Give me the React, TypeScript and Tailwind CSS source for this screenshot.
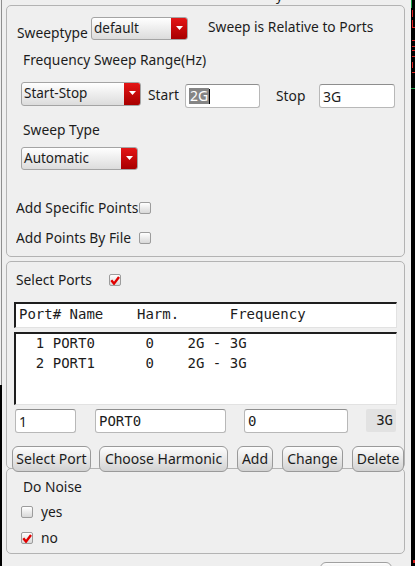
import React from "react";

const sans = "font-['Noto_Sans','DejaVu_Sans',sans-serif]";
const mono = "font-['DejaVu_Sans_Mono',monospace]";

function Combo({ label, w, h }: { label: string; w: string; h: string }) {
  return (
    <div
      className={`flex shrink-0 ${w} ${h} rounded-[3px] border border-[#a4a4a4] bg-linear-to-b from-white to-[#dcdcdc] overflow-hidden`}
    >
      <span className="flex-1 pl-[2px] leading-[20px] text-[13.5px] text-[#1c1c1c]">{label}</span>
      <div className="w-[16px] flex items-center justify-center bg-linear-to-b from-[#e41515] to-[#a80000]">
        <svg width="7" height="4" viewBox="0 0 7 4" className="-mt-[2px]">
          <path d="M0 0 H7 L3.5 4 Z" fill="white" />
        </svg>
      </div>
    </div>
  );
}

function Check({ on }: { on?: boolean }) {
  return (
    <div className="w-[12px] h-[12px] shrink-0 rounded-[2px] border border-[#9c9c9c] bg-linear-to-b from-white to-[#d8d8d8] flex items-center justify-center">
      {on && (
        <svg width="10" height="9" viewBox="0 0 10 9">
          <path d="M1.3 4.3 L4 7.6 L9 1" stroke="#e00000" strokeWidth="2.4" fill="none" />
        </svg>
      )}
    </div>
  );
}

function Field({ w, h = "h-[24px]", children }: { w: string; h?: string; children?: React.ReactNode }) {
  return (
    <div
      className={`${w} ${h} shrink-0 rounded-[3px] border border-[#b8b8b8] border-t-[#8e8e8e] bg-white flex items-center pl-[3px] text-[14px] text-[#1c1c1c]`}
    >
      {children}
    </div>
  );
}

function Btn({ w, label, ml }: { w: string; label: string; ml: string }) {
  return (
    <button
      className={`${w} ${ml} h-[26px] shrink-0 rounded-[6px] border border-[#9a9a9a] bg-linear-to-b from-[#fdfdfd] to-[#d2d2d2] text-[14px] leading-[24px] text-[#1c1c1c] text-center whitespace-nowrap`}
    >
      {label}
    </button>
  );
}

export default function App() {
  return (
    <div className={`w-[415px] h-[566px] overflow-hidden flex bg-[#efefef] ${sans}`}>
      {/* left edge */}
      <div className="w-[6px] shrink-0 flex flex-col">
        <div className="h-[385px] w-[2px] border-r border-[#8e8e8e]" />
        <div className="flex-1 w-[2px] bg-black" />
      </div>

      <div className="w-[399px] shrink-0">
        <div className="h-[5px] overflow-hidden pl-[270px]">
          <span className="block -mt-[10px] text-[13px] leading-[13px] text-[#222]">y</span>
        </div>

        {/* sweep settings */}
        <div className="h-[252px] border border-[#b3b3b3] rounded-[5px] text-[13.8px] text-[#1c1c1c]">
          <div className="flex items-start h-[23px] mt-[11px] pl-[10px]">
            <span className="w-[74px] mt-[7px] leading-[18px]">Sweeptype</span>
            <Combo label="default" w="w-[97px]" h="h-[23px]" />
            <span className="ml-[20px] mt-[1px] leading-[18px] whitespace-nowrap">Sweep is Relative to Ports</span>
          </div>
          <div className="mt-[11px] pl-[16px] leading-[18px]">Frequency Sweep Range(Hz)</div>
          <div className="flex items-start h-[26px] mt-[13px] pl-[14px]">
            <Combo label="Start-Stop" w="w-[120px]" h="h-[24px]" />
            <span className="ml-[7px] w-[37px] mt-[4px] leading-[18px]">Start</span>
            <div className="mt-[2px]">
              <Field w="w-[75px]">
                <span className="bg-[#858585] text-white px-[1px] leading-[16px]">2G</span>
                <span className="w-[1px] h-[15px] bg-black" />
              </Field>
            </div>
            <span className="ml-[16px] w-[43px] mt-[5px] leading-[18px]">Stop</span>
            <div className="mt-[2px]">
              <Field w="w-[76px]">3G</Field>
            </div>
          </div>
          <div className="mt-[13px] pl-[16px] leading-[18px]">Sweep Type</div>
          <div className="mt-[8px] pl-[14px]">
            <Combo label="Automatic" w="w-[117px]" h="h-[23px]" />
          </div>
          <div className="flex items-start mt-[29px] pl-[9px]">
            <span className="w-[123px] overflow-hidden whitespace-nowrap leading-[18px]">Add Specific Points</span>
            <div className="mt-[3px]">
              <Check />
            </div>
          </div>
          <div className="flex items-start mt-[12px] pl-[9px]">
            <span className="w-[123px] overflow-hidden whitespace-nowrap leading-[18px]">Add Points By File</span>
            <div className="mt-[3px]">
              <Check />
            </div>
          </div>
        </div>

        {/* ports */}
        <div className="mt-[4px] h-[208px] border border-[#b3b3b3] rounded-[5px] text-[13.8px] text-[#1c1c1c]">
          <div className="flex items-start mt-[9px] pl-[9px]">
            <span className="w-[93px] leading-[18px]">Select Ports</span>
            <div className="mt-[3px]">
              <Check on />
            </div>
          </div>
          <div
            className={`mt-[13px] ml-[7px] w-[383px] h-[26px] bg-white border-t-2 border-l-2 border-r border-b border-t-[#1e1e1e] border-l-[#1e1e1e] border-r-[#e2e2e2] border-b-[#e2e2e2] pl-[3px] leading-[20px] text-[14px] whitespace-pre ${mono}`}
          >
            {"Port# Name    Harm.      Frequency"}
          </div>
          <div
            className={`mt-[4px] ml-[7px] w-[383px] h-[73px] bg-white border-t-2 border-l-2 border-r border-b border-t-[#1e1e1e] border-l-[#1e1e1e] border-r-[#e2e2e2] border-b-[#e2e2e2] pl-[3px] text-[14px] leading-[20px] whitespace-pre ${mono}`}
          >
            <div className="-mt-[1px]">{"  1 PORT0      0    2G - 3G"}</div>
            <div>{"  2 PORT1      0    2G - 3G"}</div>
          </div>
          <div className="flex mt-[4px] ml-[8px]">
            <Field w="w-[61px]">1</Field>
            <div className="ml-[19px]">
              <Field w="w-[131px]">
                <span className={mono}>PORT0</span>
              </Field>
            </div>
            <div className="ml-[18px]">
              <Field w="w-[104px]">
                <span className={mono}>0</span>
              </Field>
            </div>
            <div
              className={`ml-[18px] w-[30px] h-[23px] bg-[#e2e2e2] rounded-[2px] flex items-center justify-end pr-[3px] text-[14px] ${mono}`}
            >
              3G
            </div>
          </div>
          <div className="relative z-10 flex mt-[13px] ml-[5px]">
            <Btn w="w-[79px]" ml="ml-0" label="Select Port" />
            <Btn w="w-[129px]" ml="ml-[8px]" label="Choose Harmonic" />
            <Btn w="w-[36px]" ml="ml-[9px]" label="Add" />
            <Btn w="w-[61px]" ml="ml-[9px]" label="Change" />
            <Btn w="w-[52px]" ml="ml-[9px]" label="Delete" />
          </div>
        </div>

        {/* noise */}
        <div className="-mt-[1px] h-[86px] border border-[#b3b3b3] rounded-[5px] text-[13.8px] text-[#1c1c1c]">
          <div className="mt-[9px] pl-[16px] leading-[18px]">Do Noise</div>
          <div className="flex items-start mt-[7px] pl-[14px]">
            <div className="mt-[3px]">
              <Check />
            </div>
            <span className="ml-[8px] leading-[18px]">yes</span>
          </div>
          <div className="flex items-start mt-[8px] pl-[14px]">
            <div className="mt-[3px]">
              <Check on />
            </div>
            <span className="ml-[8px] leading-[18px]">no</span>
          </div>
        </div>

        <div className="mt-[8px] ml-[314px] w-[72px] h-[10px] rounded-t-[6px] border border-[#a0a0a0] bg-linear-to-b from-[#fdfdfd] to-[#e8e8e8]" />
      </div>

      <div className="w-[6px] shrink-0" />

      {/* neighbouring window strip */}
      <div className="relative w-[4px] shrink-0 bg-black">
        <div className="absolute left-0 top-0 w-[1px] h-[8px] bg-[#1fa34a]" />
        <div className="absolute left-0 top-[88px] w-[4px] h-[1px] bg-[#1fa34a]" />
        <div className="absolute left-[1px] top-[10px] w-[1px] h-[7px] bg-[#e02020]" />
        <div className="absolute left-[1px] top-[20px] w-[1px] h-[8px] bg-[#e02020]" />
        <div className="absolute left-[1px] top-[27px] w-[3px] h-[1px] bg-[#e02020]" />
        <div className="absolute left-[1px] top-[40px] w-[3px] h-[1px] bg-[#e02020]" />
        <div className="absolute left-[1px] top-[46px] w-[3px] h-[1px] bg-[#e02020]" />
        <div className="absolute left-[1px] top-[50px] w-[3px] h-[1px] bg-[#e02020]" />
        <div className="absolute left-[1px] top-[56px] w-[3px] h-[1px] bg-[#e02020]" />
        <div className="absolute left-[1px] top-[62px] w-[1px] h-[6px] bg-[#e02020]" />
        <div className="absolute left-[1px] top-[72px] w-[3px] h-[1px] bg-[#e02020]" />
        <div className="absolute left-[2px] top-[560px] w-[2px] h-[3px] bg-[#e02020]" />
      </div>
    </div>
  );
}
